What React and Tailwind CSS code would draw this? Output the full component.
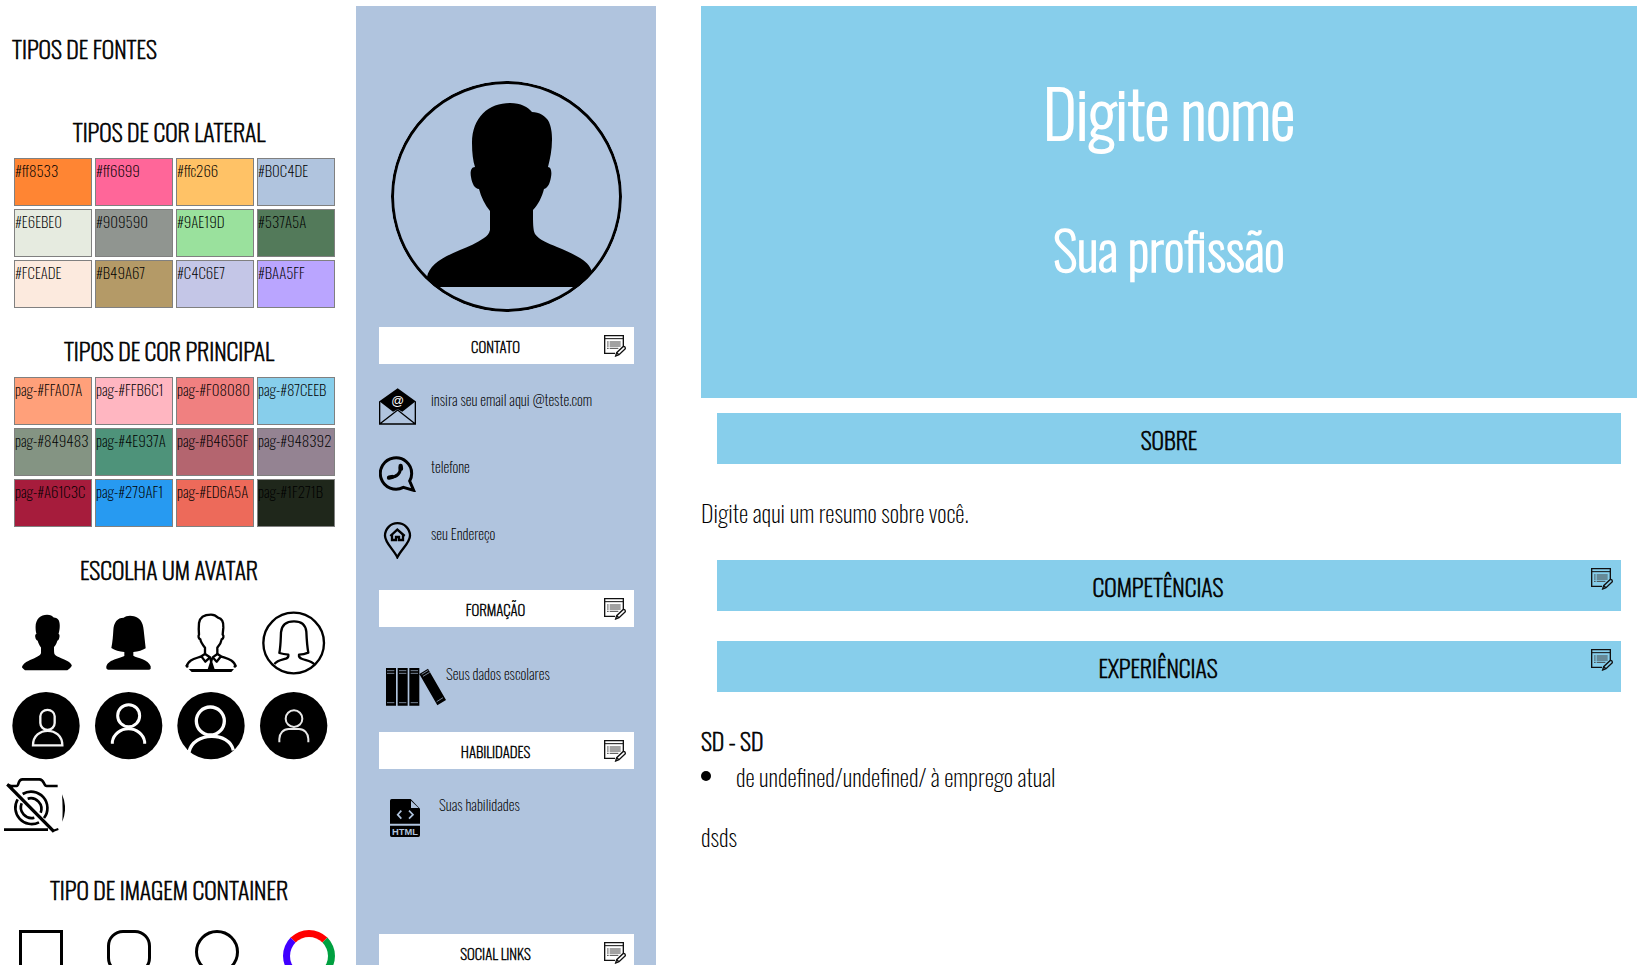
import React from "react";

const lateralColors = [
  ["#ff8533", "bg-[#ff8533]"],
  ["#ff6699", "bg-[#ff6699]"],
  ["#ffc266", "bg-[#ffc266]"],
  ["#B0C4DE", "bg-[#B0C4DE]"],
  ["#E6EBE0", "bg-[#E6EBE0]"],
  ["#909590", "bg-[#909590]"],
  ["#9AE19D", "bg-[#9AE19D]"],
  ["#537A5A", "bg-[#537A5A]"],
  ["#FCEADE", "bg-[#FCEADE]"],
  ["#B49A67", "bg-[#B49A67]"],
  ["#C4C6E7", "bg-[#C4C6E7]"],
  ["#BAA5FF", "bg-[#BAA5FF]"],
];

const mainColors = [
  ["pag-#FFA07A", "bg-[#FFA07A]"],
  ["pag-#FFB6C1", "bg-[#FFB6C1]"],
  ["pag-#F08080", "bg-[#F08080]"],
  ["pag-#87CEEB", "bg-[#87CEEB]"],
  ["pag-#849483", "bg-[#849483]"],
  ["pag-#4E937A", "bg-[#4E937A]"],
  ["pag-#B4656F", "bg-[#B4656F]"],
  ["pag-#948392", "bg-[#948392]"],
  ["pag-#A61C3C", "bg-[#A61C3C]"],
  ["pag-#279AF1", "bg-[#279AF1]"],
  ["pag-#ED6A5A", "bg-[#ED6A5A]"],
  ["pag-#1F271B", "bg-[#1F271B]"],
];

function SideHeading({ children }) {
  return <h2 className="pr-[18px] text-center text-2xl leading-8 [-webkit-text-stroke:0.03em]">{children}</h2>;
}

function Palette({ colors }) {
  return (
    <div className="mt-[11px] mb-[26px] grid grid-cols-[repeat(4,78px)] gap-[3px] pl-[14px]">
      {colors.map(([label, bg]) => (
        <button
          key={label}
          type="button"
          className={`flex h-12 items-start border border-[#808080] text-[15px] leading-[22px] whitespace-nowrap text-black ${bg}`}
        >
          {label}
        </button>
      ))}
    </div>
  );
}

function ManSilhouette() {
  return (
    <path d="M119 22C98 22 81 36 81 62C81 72 82 80 84 86C80 86 79 91 80 96C81 103 84 108 88 108C90 116 94 124 99 130L99 149C98 153 96 155 93 157C86 162 77 166 69 169C52 176 38 184 36 196C38 200 42 203 46 206L186 206C192 202 198 197 201 191C199 184 194 180 189 177C182 173 174 169 166 166C157 162 148 159 144 153C142 149 142 142 142 129C147 124 151 116 153 108C157 107 159 102 160 96C161 91 160 86 157 86C159 78 161 69 161 59C161 51 160 46 158 41C155 35 148 31 141 31C137 26 130 22 119 22Z" />
  );
}

const avatars = [
  {
    label: "Avatar homem",
    box: "3 3 225 225",
    art: <ManSilhouette />,
  },
  {
    label: "Avatar mulher",
    box: "285 42 204 204",
    art: (
      <path d="M371 68C377 62 392 60 402 64C420 69 429 82 431 105L437 160C428 166 415 170 400 171L400 182C412 190 445 192 452 214L452 221Q451 224 446 224L325 224Q320 224 319 220C318 195 355 192 373 183L373 171C358 170 344 166 334 159C338 140 339 122 340 106C341 82 352 68 371 68Z" />
    ),
  },
  {
    label: "Avatar homem de gravata",
    box: "534 42 204 204",
    art: (
      <>
        <g fill="none" stroke="#000" strokeWidth="7" strokeLinejoin="round">
          <path d="M615 178L615 158C607 148 602 141 601 133C596 131 594 124 597 119C596 107 596 95 597 84C600 65 615 59 633 59C643 59 649 63 654 68C668 71 671 83 670 98L668 119C672 122 671 130 665 133C663 145 658 152 652 158L652 178" />
          <path d="M615 177L604 184L616 200L630 187ZM652 177L663 184L650 200L638 187ZM604 184C590 190 563 193 560 216M663 184C678 190 704 194 707 216" />
        </g>
        <path d="M627 188H640L637 201L644 223H623L630 201ZM566 222H702L694 231H575ZM556 211L562 206L566 216L560 219ZM710 211L704 206L700 216L706 219Z" />
      </>
    ),
  },
  {
    label: "Avatar mulher em círculo",
    box: "783 42 204 204",
    art: (
      <g fill="none" stroke="#000" strokeWidth="7" strokeLinejoin="round">
        <circle cx="881" cy="144" r="91" />
        <path d="M823 207C833 196 846 195 858 191C864 189 866 185 865 179C854 178 845 176 838 174C842 155 842 134 843 112C845 89 861 79 882 79C904 79 917 90 919 110C920 132 921 153 925 173C916 177 908 179 897 179C896 185 900 190 907 192C921 197 934 198 943 208" />
      </g>
    ),
  },
  {
    label: "Avatar perfil 1",
    box: "36 290 204 204",
    art: (
      <>
        <circle cx="138" cy="391" r="101" />
        <g fill="none" stroke="#f4f4f4" strokeWidth="7">
          <path d="M121 363A21 19 0 0 1 164 363V383A21 20 0 0 1 121 383Z" />
          <path d="M99 450C99 392 187 392 187 450Z" />
        </g>
      </>
    ),
  },
  {
    label: "Avatar perfil 2",
    box: "285 290 204 204",
    art: (
      <>
        <circle cx="386" cy="391" r="101" />
        <g fill="none" stroke="#fff" strokeWidth="9">
          <circle cx="386" cy="361" r="33" />
          <path d="M337 445V439A49 45 0 0 1 434 439V445" />
        </g>
      </>
    ),
  },
  {
    label: "Avatar perfil 3",
    box: "534 290 204 204",
    art: (
      <>
        <circle cx="633" cy="391" r="101" />
        <g fill="none" stroke="#fff" strokeWidth="10">
          <circle cx="631" cy="377" r="42" />
          <path d="M567 470C580 408 688 408 700 465" />
        </g>
      </>
    ),
  },
  {
    label: "Avatar perfil 4",
    box: "783 290 204 204",
    art: (
      <>
        <circle cx="881" cy="391" r="101" />
        <g fill="none" stroke="#e8e8e8" strokeWidth="6">
          <circle cx="882" cy="370" r="25" />
          <path d="M838 441V431A28 30 0 0 1 866 401H897A28 30 0 0 1 925 431V441" />
        </g>
      </>
    ),
  },
];

function CameraOff() {
  return (
    <svg viewBox="0 27 195 204" className="h-[68px] w-[65px]" fill="none" stroke="#000" strokeWidth="8">
      <path d="M30 63H50C58 63 52 43 68 43H118C134 43 130 63 140 63H173M12 194H144" />
      <path d="M68 87A49 49 0 0 1 132 159M117 172A49 49 0 0 1 53 103" />
      <path d="M83 101A32 32 0 0 1 122 143M103 158A32 32 0 0 1 65 115" />
      <path d="M22 58L162 200" strokeWidth="10" />
      <path d="M158 198L175 192M22 58L40 66" strokeWidth="6" />
      <path d="M186 88Q204 128 187 170Q189 128 186 88Z" fill="#000" stroke="none" />
    </svg>
  );
}

function EditIcon() {
  return (
    <svg viewBox="762 825 66 66" className="size-[22px]" fill="none" stroke="#111">
      <path d="M820 858V827H764V880H795" strokeWidth="4" />
      <path d="M764 836H820" strokeWidth="3" />
      <path d="M779 846H812M779 852H812M779 858H812M779 865H805" strokeWidth="3" stroke="#444" />
      <path d="M771 846H776M771 852H776M771 858H776M771 865H776" strokeWidth="3" stroke="#444" />
      <path d="M797 888L800 878L819 860Q826 858 826 866L807 884ZM800 878L807 884" strokeWidth="4" />
    </svg>
  );
}

function PanelBar({ title }) {
  return (
    <div className="flex h-[37px] items-center bg-white">
      <h3 className="flex-1 pl-2 text-center text-[15px] leading-6 [-webkit-text-stroke:0.03em]">{title}</h3>
      <button type="button" aria-label={`Editar ${title}`} className="mt-2 mr-2 shrink-0 self-start">
        <EditIcon />
      </button>
    </div>
  );
}

function MailIcon() {
  return (
    <svg viewBox="87 39 111 111" className="size-[37px] shrink-0">
      <path d="M88 79L143 40L197 79L157 110L143 103L129 110Z" />
      <path d="M89 79V147H196V79M89 147L143 105L196 147" fill="none" stroke="#000" strokeWidth="4" />
      <text x="143" y="89" textAnchor="middle" fontSize="38" fill="#fff" className="font-['Liberation_Sans',sans-serif]">
        @
      </text>
    </svg>
  );
}

function PhoneIcon() {
  return (
    <svg viewBox="87 240 111 111" className="size-[37px] shrink-0" fill="none" stroke="#000">
      <path d="M179 318L191 346L160 337A47 47 0 1 1 185 296Q185 308 179 318Z" strokeWidth="9" />
      <path d="M150 278C153 294 141 306 121 307" strokeWidth="9" strokeLinecap="round" />
      <path d="M152 273L153 281M117 308L126 306" strokeWidth="13" strokeLinecap="round" />
    </svg>
  );
}

function PinIcon() {
  return (
    <svg viewBox="87 443 111 111" className="size-[37px] shrink-0">
      <path
        d="M142 549C131 526 105 505 105 484A37 37 0 0 1 180 484C180 505 153 526 142 549Z"
        fill="none"
        stroke="#000"
        strokeWidth="7"
      />
      <path d="M126 481V497H138V488H147V497H159V481" fill="none" stroke="#000" strokeWidth="7" />
      <path d="M121 485L142 466L164 485" fill="none" stroke="#000" strokeWidth="7" />
    </svg>
  );
}

function BooksIcon() {
  return (
    <svg viewBox="108 279 180 114" className="h-[38px] w-[60px] shrink-0">
      <path d="M108 279H138V392H108ZM143 279H173V392H143ZM178 279H208V392H178ZM208 297L234 281L288 375L262 391Z" />
      <path
        d="M111 287H133M111 295H133M111 383H133M147 287H169M147 295H169M147 383H169M182 287H204M182 295H204M182 383H204M215 298L235 286M219 304L239 292M260 380L279 368"
        stroke="#B0C4DE"
        strokeWidth="2"
      />
    </svg>
  );
}

function HtmlIcon() {
  return (
    <svg viewBox="120 87 90 114" className="h-[38px] w-[30px] shrink-0">
      <path d="M125 87H182L210 116V161H120V92Q120 87 125 87ZM120 167H210V196Q210 201 205 201H125Q120 201 120 196Z" />
      <path d="M183 92V114H206Z" fill="#B0C4DE" />
      <path d="M154 122L143 134L154 146M177 122L189 134L177 146" fill="none" stroke="#B0C4DE" strokeWidth="5" />
      <text x="165" y="194" textAnchor="middle" fontSize="28" fill="#B0C4DE" className="font-['Liberation_Sans',sans-serif] font-bold">
        HTML
      </text>
    </svg>
  );
}

function ContactRow({ icon, children }) {
  return (
    <div className="flex h-[37px] items-start gap-[15px]">
      {icon}
      <p className="text-[15px] leading-[22px]">{children}</p>
    </div>
  );
}

function MainBar({ title, editable }) {
  return (
    <div className="mx-4 flex h-[51px] items-center bg-[#87CEEB]">
      <h2
        className={`flex-1 pt-px text-center text-2xl leading-8 [-webkit-text-stroke:0.03em] ${editable ? "pl-2" : ""}`}
      >
        {title}
      </h2>
      {editable && (
        <button type="button" aria-label={`Editar ${title}`} className="mt-2 mr-2 shrink-0 self-start">
          <EditIcon />
        </button>
      )}
    </div>
  );
}

export default function App() {
  return (
    <div className="flex min-h-screen items-stretch bg-white font-['Oswald','Liberation_Sans_Narrow',sans-serif] font-extralight text-black">
      <aside className="w-[356px] shrink-0 pt-8">
        <h2 className="mb-[51px] pl-3 text-2xl leading-8 [-webkit-text-stroke:0.03em]">TIPOS DE FONTES</h2>
        <SideHeading>TIPOS DE COR LATERAL</SideHeading>
        <Palette colors={lateralColors} />
        <SideHeading>TIPOS DE COR PRINCIPAL</SideHeading>
        <Palette colors={mainColors} />
        <SideHeading>ESCOLHA UM AVATAR</SideHeading>
        <div className="mt-6 grid grid-cols-[repeat(4,68px)] gap-[15px] pl-3">
          {avatars.map((a) => (
            <button key={a.label} type="button" aria-label={a.label} className="size-[68px]">
              <svg viewBox={a.box} className="size-full overflow-visible">
                {a.art}
              </svg>
            </button>
          ))}
        </div>
        <button type="button" aria-label="Sem foto" className="mt-[14px] mb-[31px] block">
          <CameraOff />
        </button>
        <SideHeading>TIPO DE IMAGEM CONTAINER</SideHeading>
        <div className="mt-[25px] flex gap-11 pl-[19px]">
          <button type="button" aria-label="Quadrado" className="size-11 border-3 border-black" />
          <button type="button" aria-label="Arredondado" className="size-11 rounded-2xl border-3 border-black" />
          <button type="button" aria-label="Círculo" className="size-11 rounded-full border-3 border-black" />
          <button
            type="button"
            aria-label="Círculo colorido"
            className="size-[52px] rounded-full border-7 border-t-[#ff0000] border-r-[#00a040] border-b-[#ffd000] border-l-[#4000ff]"
          />
        </div>
      </aside>

      <section className="mt-[6px] w-[300px] shrink-0 bg-[#B0C4DE] pt-[75px] pr-[22px] pl-[23px]">
        <div className="mx-3 size-[231px] overflow-hidden rounded-full">
          <svg viewBox="0 0 231 231" className="size-full" role="img" aria-label="Foto de perfil">
            <ManSilhouette />
            <circle cx="115.5" cy="115.5" r="114" fill="none" stroke="#000" strokeWidth="3" />
          </svg>
        </div>
        <div className="mt-[15px]">
          <PanelBar title="CONTATO" />
          <div className="flex flex-col gap-[30px] pt-6 pb-[31px]">
            <ContactRow icon={<MailIcon />}>insira seu email aqui @teste.com</ContactRow>
            <ContactRow icon={<PhoneIcon />}>telefone</ContactRow>
            <ContactRow icon={<PinIcon />}>seu Endereço</ContactRow>
          </div>
          <PanelBar title="FORMAÇÃO" />
          <div className="flex h-[105px] items-start pt-[35px] pl-[7px]">
            <div className="pt-[6px]">
              <BooksIcon />
            </div>
            <p className="text-[15px] leading-[22px]">Seus dados escolares</p>
          </div>
          <PanelBar title="HABILIDADES" />
          <div className="flex h-[165px] items-start gap-[19px] pt-[30px] pl-[11px]">
            <HtmlIcon />
            <p className="text-[15px] leading-[10px]">Suas habilidades</p>
          </div>
          <PanelBar title="SOCIAL LINKS" />
        </div>
      </section>

      <main className="mt-[6px] mr-[11px] ml-[45px] min-w-0 flex-1">
        <header className="mb-[15px] flex h-[392px] flex-col items-center bg-[#87CEEB] pt-[65px] text-white">
          <h1 className="text-[64px] leading-[80px] [-webkit-text-stroke:0.03em]">Digite nome</h1>
          <p className="mt-[63px] text-[53px] leading-[68px] [-webkit-text-stroke:0.03em]">Sua profissão</p>
        </header>
        <MainBar title="SOBRE" />
        <p className="my-8 text-2xl leading-8">Digite aqui um resumo sobre você.</p>
        <MainBar title="COMPETÊNCIAS" editable />
        <div className="mt-[30px]">
          <MainBar title="EXPERIÊNCIAS" editable />
        </div>
        <h3 className="mt-8 text-2xl leading-8 [-webkit-text-stroke:0.03em]">SD - SD</h3>
        <ul className="mt-1">
          <li className="flex items-center gap-[25px] text-2xl leading-8">
            <span className="size-[10px] rounded-full bg-black" />
            de undefined/undefined/ à emprego atual
          </li>
        </ul>
        <p className="mt-7 text-2xl leading-8">dsds</p>
      </main>
    </div>
  );
}
